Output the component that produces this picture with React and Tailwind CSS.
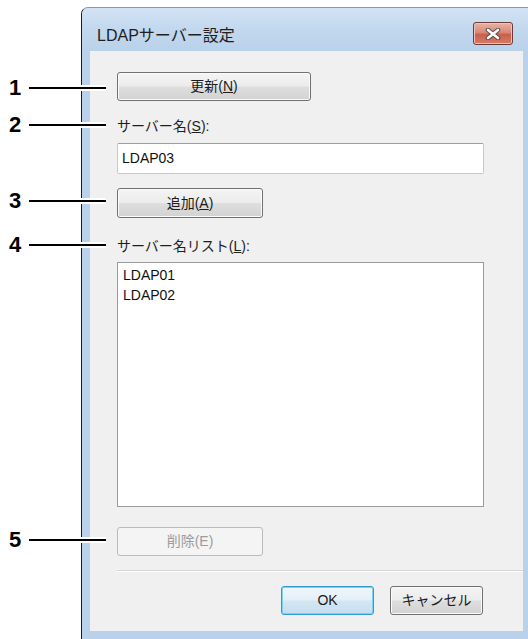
import React from 'react';

const font = { fontFamily: '"Liberation Sans", "Noto Sans CJK JP", sans-serif' };

// Win7 style push button
const Btn = ({ children, className = '', disabled = false, focused = false }) => {
  let look = 'border-[#707070] text-[#1b1b1b] bg-[linear-gradient(to_bottom,#f4f4f4_0%,#ececec_48%,#dedede_52%,#d2d2d2_100%)] shadow-[inset_0_0_0_1px_#fbfbfb]';
  if (disabled) look = 'border-[#b6bcc0] text-[#9c9c9c] bg-[#f4f4f4]';
  if (focused) look = 'border-[#2f9ad6] text-[#1b1b1b] bg-[linear-gradient(to_bottom,#f0f7fc_0%,#e3eff8_48%,#d3e6f3_52%,#c6def0_100%)] shadow-[inset_0_0_0_1px_#7fd0f5]';
  return (
    <div className={`flex items-center justify-center rounded-[3px] border text-[14px] ${look} ${className}`}>
      {children}
    </div>
  );
};

const Callout = ({ n, top }) => (
  <div className={`absolute left-[9px] flex items-center h-[22px] ${top}`}>
    <span className="w-[20px] text-[22px] font-bold leading-none text-black" style={{ fontFamily: '"Liberation Sans", sans-serif' }}>{n}</span>
    <div className="w-[77px] h-[6px] bg-white flex items-center">
      <div className="w-full h-[2px] bg-black"></div>
    </div>
  </div>
);

export default function App() {
  return (
    <div className="relative w-[528px] h-[639px] bg-white overflow-hidden" style={font}>

      {/* dialog window */}
      <div className="ml-[81px] mt-[7px] w-[447px] h-[632px] flex flex-col rounded-tl-[7px] border-l border-t border-l-[#1c1c1c] border-t-[#8a97a5] bg-[#b9d1ea]">

        {/* title bar */}
        <div className="h-[43px] flex justify-between pl-[15px] pr-[15px] rounded-tl-[6px] bg-[linear-gradient(to_bottom,#d3e3f4_0%,#c2d8ee_50%,#b9d1ea_100%)]">
          <span className="mt-[17px] text-[16px] leading-[22px] text-[#1e1e1e]">LDAPサーバー設定</span>
          <div className="mt-[14px] w-[40px] h-[23px] rounded-[3px] border border-[#6b3a3a] flex items-center justify-center bg-[linear-gradient(to_bottom,#e8b3a6_0%,#d98876_45%,#c9604b_55%,#d77b63_100%)] shadow-[inset_0_0_0_1px_#eec3b8]">
            <svg width="16" height="12" viewBox="0 0 16 12">
              <path d="M3 2 L13 10 M13 2 L3 10" stroke="#5a4a4a" strokeWidth="4.5" strokeLinecap="round" />
              <path d="M3 2 L13 10 M13 2 L3 10" stroke="#ffffff" strokeWidth="2.6" strokeLinecap="round" />
            </svg>
          </div>
        </div>

        {/* frame + client area */}
        <div className="flex-1 flex pl-[8px] pr-[5px] pb-[8px]">
          <div className="flex-1 flex flex-col bg-[#f0f0f0] pl-[27px] pt-[21px]">

            <Btn className="w-[194px] h-[29px]">更新(<span className="underline">N</span>)</Btn>

            <div className="mt-[15px] h-[20px] leading-[20px] text-[14px] text-[#1e1e1e]">サーバー名(<span className="underline">S</span>):</div>
            <div className="mt-[7px] w-[367px] h-[31px] bg-white border border-[#b4cde3] border-t-[#7aa7cd] rounded-[2px] flex items-center pl-[4px] text-[14px] text-[#111]">
              LDAP03
            </div>

            <Btn className="mt-[14px] w-[146px] h-[30px]">追加(<span className="underline">A</span>)</Btn>

            <div className="mt-[18px] h-[20px] leading-[20px] text-[14px] text-[#1e1e1e]">サーバー名リスト(<span className="underline">L</span>):</div>
            <div className="mt-[6px] w-[367px] h-[245px] bg-white border border-[#9a9a9a] pl-[5px] pt-[2px] text-[14px] leading-[20px] text-[#111]">
              <div>LDAP01</div>
              <div>LDAP02</div>
            </div>

            <Btn disabled className="mt-[20px] w-[146px] h-[29px]">削除(E)</Btn>

            <div className="mt-[14px] h-[2px] border-t border-[#d5d5d5] border-b border-b-white"></div>

            <div className="mt-[14px] flex justify-end gap-[16px] pr-[40px]">
              <Btn focused className="w-[93px] h-[29px]">OK</Btn>
              <Btn className="w-[93px] h-[29px]">キャンセル</Btn>
            </div>
          </div>
        </div>
      </div>

      {/* callouts */}
      <Callout n="1" top="top-[77px]" />
      <Callout n="2" top="top-[114px]" />
      <Callout n="3" top="top-[190px]" />
      <Callout n="4" top="top-[234px]" />
      <Callout n="5" top="top-[529px]" />
    </div>
  );
}
